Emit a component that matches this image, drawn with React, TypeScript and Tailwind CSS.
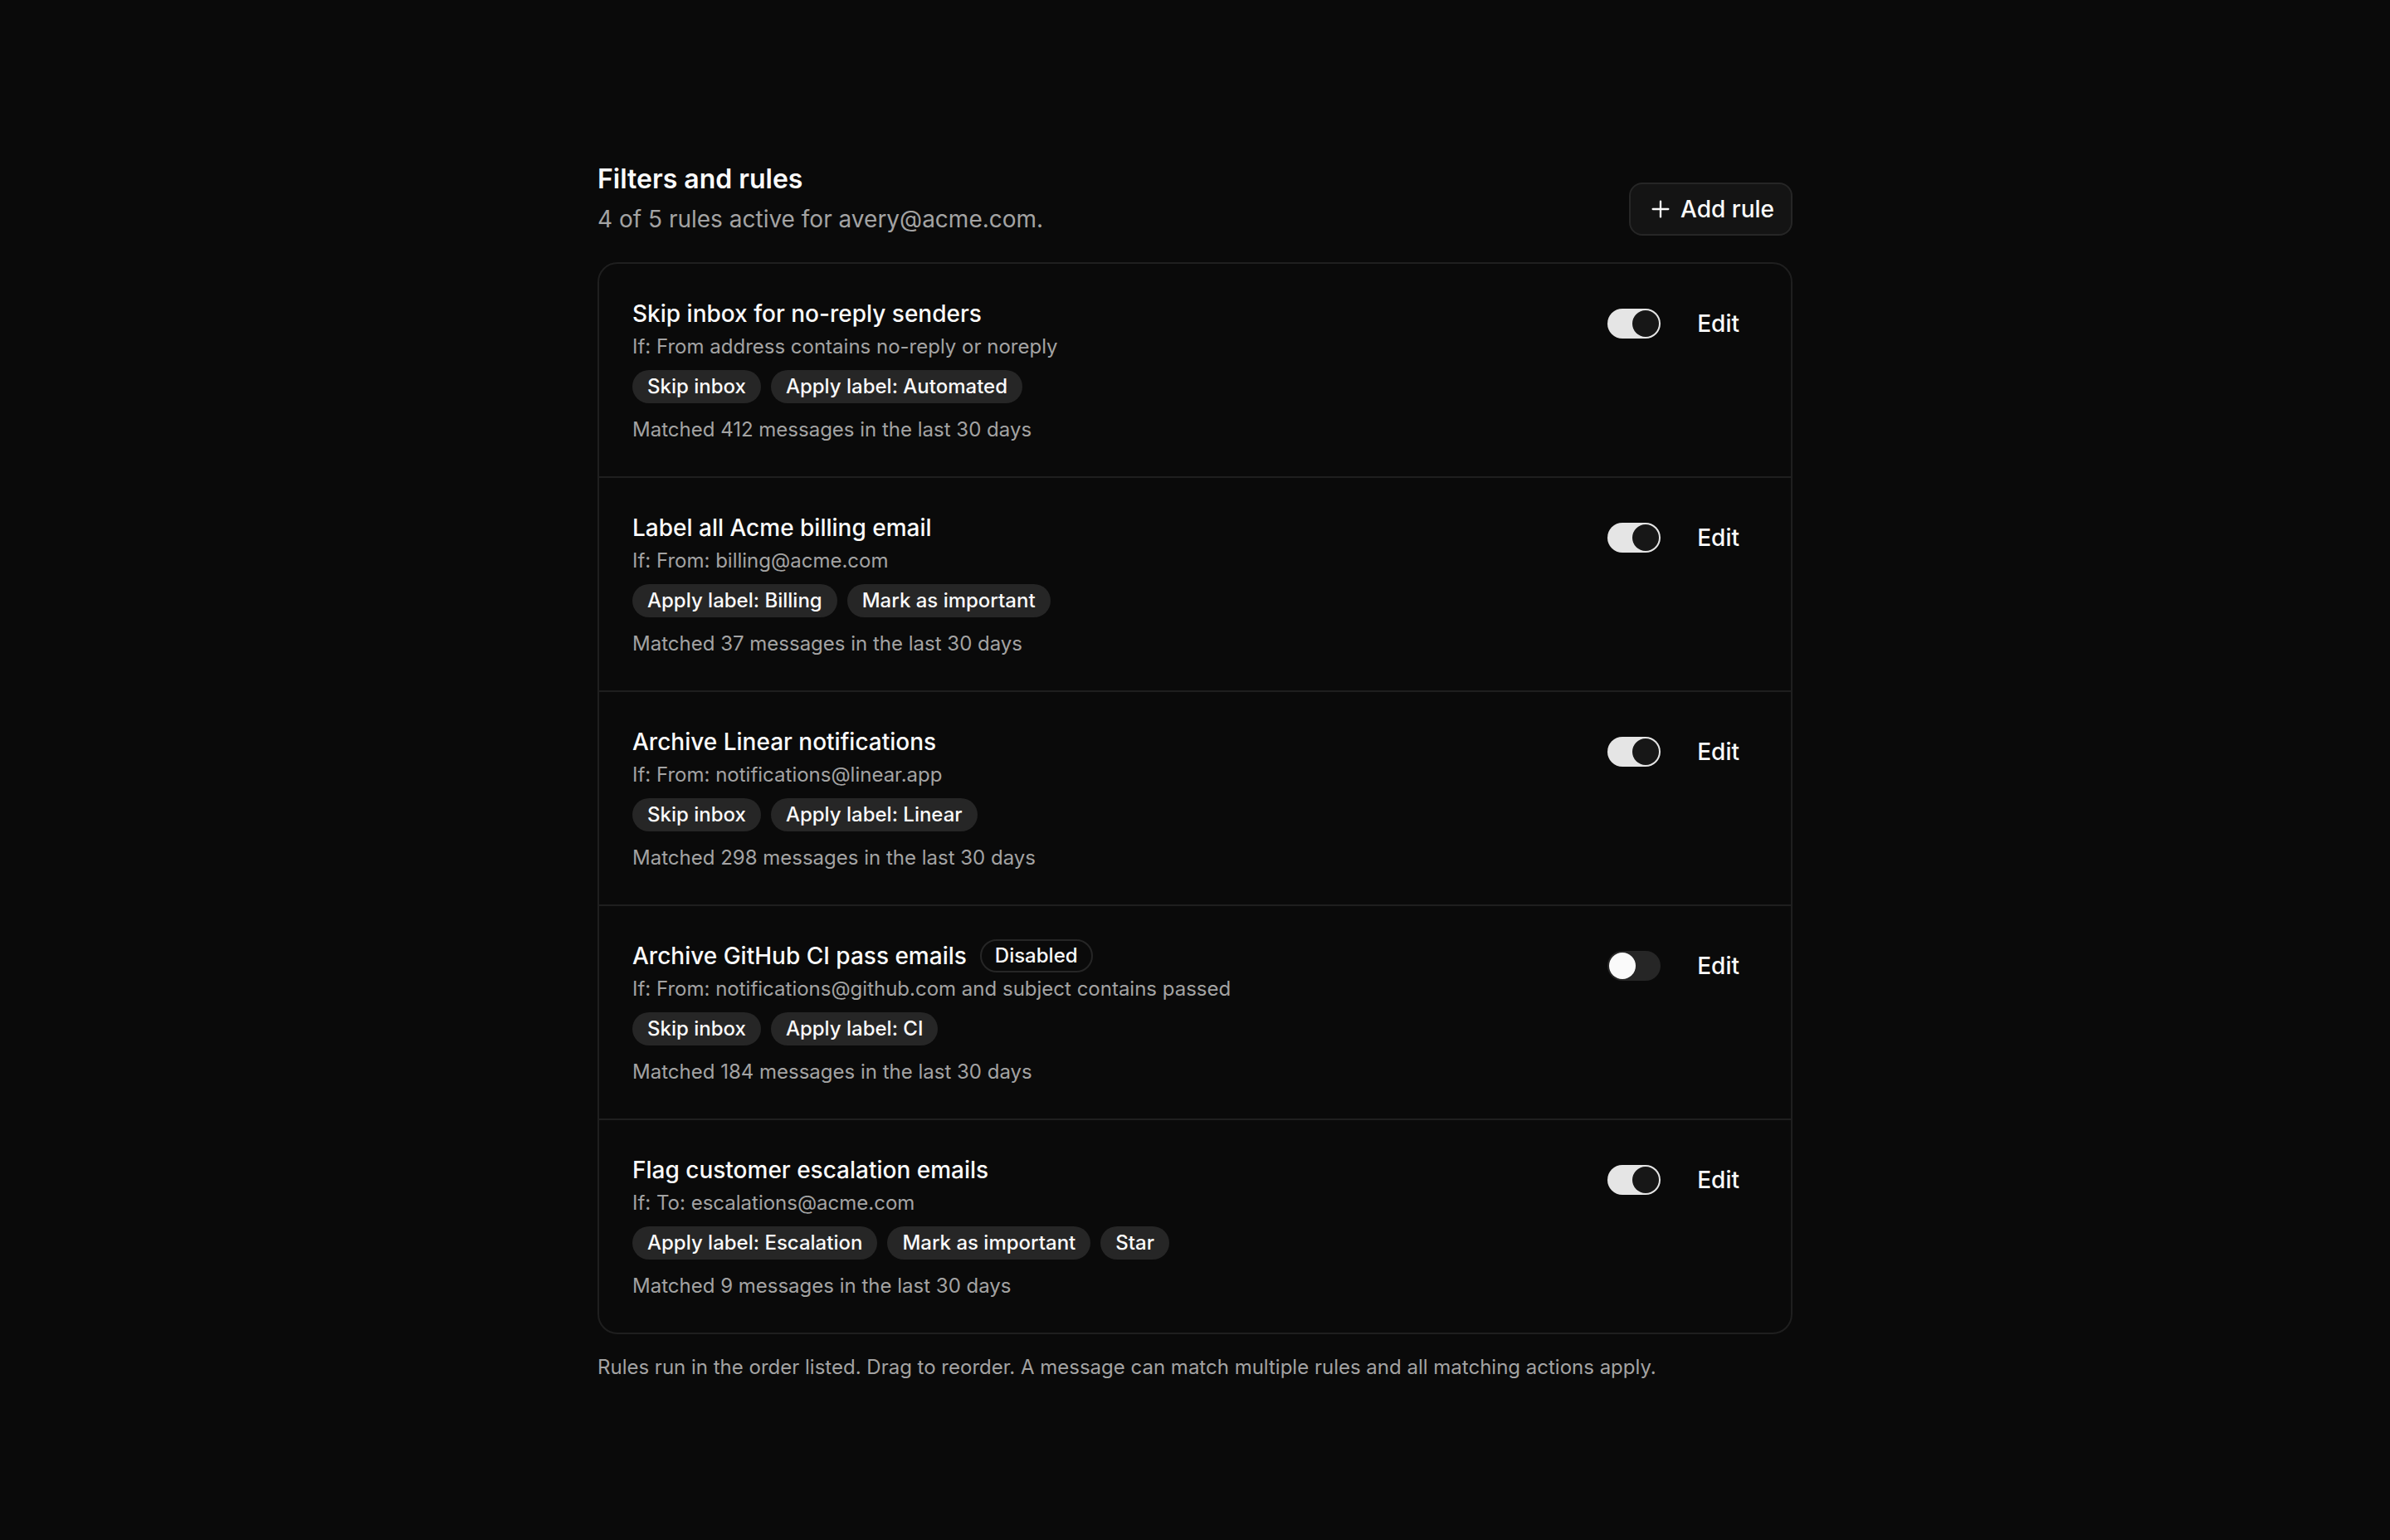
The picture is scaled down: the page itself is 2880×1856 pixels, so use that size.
import React, { useState } from 'react';
import { Plus } from 'lucide-react';

type Rule = {
  id: number;
  name: string;
  condition: string;
  actions: string[];
  matched: number;
  enabled: boolean;
};

const INITIAL_RULES: Rule[] = [
  {
    id: 1,
    name: 'Skip inbox for no-reply senders',
    condition: 'If: From address contains no-reply or noreply',
    actions: ['Skip inbox', 'Apply label: Automated'],
    matched: 412,
    enabled: true,
  },
  {
    id: 2,
    name: 'Label all Acme billing email',
    condition: 'If: From: billing@acme.com',
    actions: ['Apply label: Billing', 'Mark as important'],
    matched: 37,
    enabled: true,
  },
  {
    id: 3,
    name: 'Archive Linear notifications',
    condition: 'If: From: notifications@linear.app',
    actions: ['Skip inbox', 'Apply label: Linear'],
    matched: 298,
    enabled: true,
  },
  {
    id: 4,
    name: 'Archive GitHub CI pass emails',
    condition: 'If: From: notifications@github.com and subject contains passed',
    actions: ['Skip inbox', 'Apply label: CI'],
    matched: 184,
    enabled: false,
  },
  {
    id: 5,
    name: 'Flag customer escalation emails',
    condition: 'If: To: escalations@acme.com',
    actions: ['Apply label: Escalation', 'Mark as important', 'Star'],
    matched: 9,
    enabled: true,
  },
];

const Toggle: React.FC<{ on: boolean; onChange: () => void }> = ({ on, onChange }) => (
  <button
    role="switch"
    aria-checked={on}
    onClick={onChange}
    className={`flex h-9 w-16 shrink-0 items-center rounded-full p-0.5 transition-colors ${
      on ? 'justify-end bg-[#e5e5e5]' : 'justify-start bg-[#262626]'
    }`}
  >
    <span className={`block size-8 rounded-full ${on ? 'bg-[#171717]' : 'bg-[#fafafa]'}`} />
  </button>
);

export default function App() {
  const [rules, setRules] = useState<Rule[]>(INITIAL_RULES);
  const activeCount = rules.filter((r) => r.enabled).length;

  const toggle = (id: number) =>
    setRules((prev) => prev.map((r) => (r.id === id ? { ...r, enabled: !r.enabled } : r)));

  return (
    <div className="min-h-screen bg-[#0a0a0a] pt-48 font-[Inter,sans-serif] text-[#fafafa] antialiased">
      <div className="mx-auto w-[1440px]">
        <div className="mb-8 flex items-end justify-between">
          <div>
            <h1 className="text-[32px] leading-12 font-semibold">Filters and rules</h1>
            <p className="mt-1 text-[28px] leading-10 text-[#a3a3a3]">
              {activeCount} of {rules.length} rules active for avery@acme.com.
            </p>
          </div>
          <button className="flex h-16 items-center gap-2 rounded-2xl border-2 border-[#262626] bg-[#141414] px-5 text-[28px] font-medium">
            <Plus size={32} strokeWidth={1.75} />
            Add rule
          </button>
        </div>

        <div className="overflow-hidden rounded-3xl border-2 border-[#1f1f1f] bg-[#0a0a0a]">
          {rules.map((rule, i) => (
            <div
              key={rule.id}
              className={`flex items-start justify-between px-10 pt-10 pb-9 ${i > 0 ? 'border-t-2 border-[#1f1f1f]' : ''}`}
            >
              <div className="min-w-0">
                <div className="flex items-center gap-4">
                  <h2 className="text-[28px] leading-10 font-medium">{rule.name}</h2>
                  {!rule.enabled && (
                    <span className="rounded-full border-2 border-[#262626] px-4 text-[24px] leading-9 font-medium">
                      Disabled
                    </span>
                  )}
                </div>
                <p className="mt-0.5 text-[24px] leading-9 text-[#a3a3a3]">{rule.condition}</p>
                <div className="mt-2.5 flex flex-wrap gap-3">
                  {rule.actions.map((a) => (
                    <span
                      key={a}
                      className="rounded-full bg-[#262626] px-[18px] py-1 text-[24px] leading-8 font-medium"
                    >
                      {a}
                    </span>
                  ))}
                </div>
                <p className="mt-3 text-[24px] leading-10 text-[#a3a3a3]">
                  Matched {rule.matched} messages in the last 30 days
                </p>
              </div>
              <div className="flex shrink-0 items-center gap-[22px]">
                <Toggle on={rule.enabled} onChange={() => toggle(rule.id)} />
                <button className="h-16 rounded-xl px-[22px] text-[28px] font-medium">Edit</button>
              </div>
            </div>
          ))}
        </div>

        <p className="mt-5 text-[24px] leading-10 text-[#a3a3a3]">
          Rules run in the order listed. Drag to reorder. A message can match multiple rules and all
          matching actions apply.
        </p>
      </div>
    </div>
  );
}
